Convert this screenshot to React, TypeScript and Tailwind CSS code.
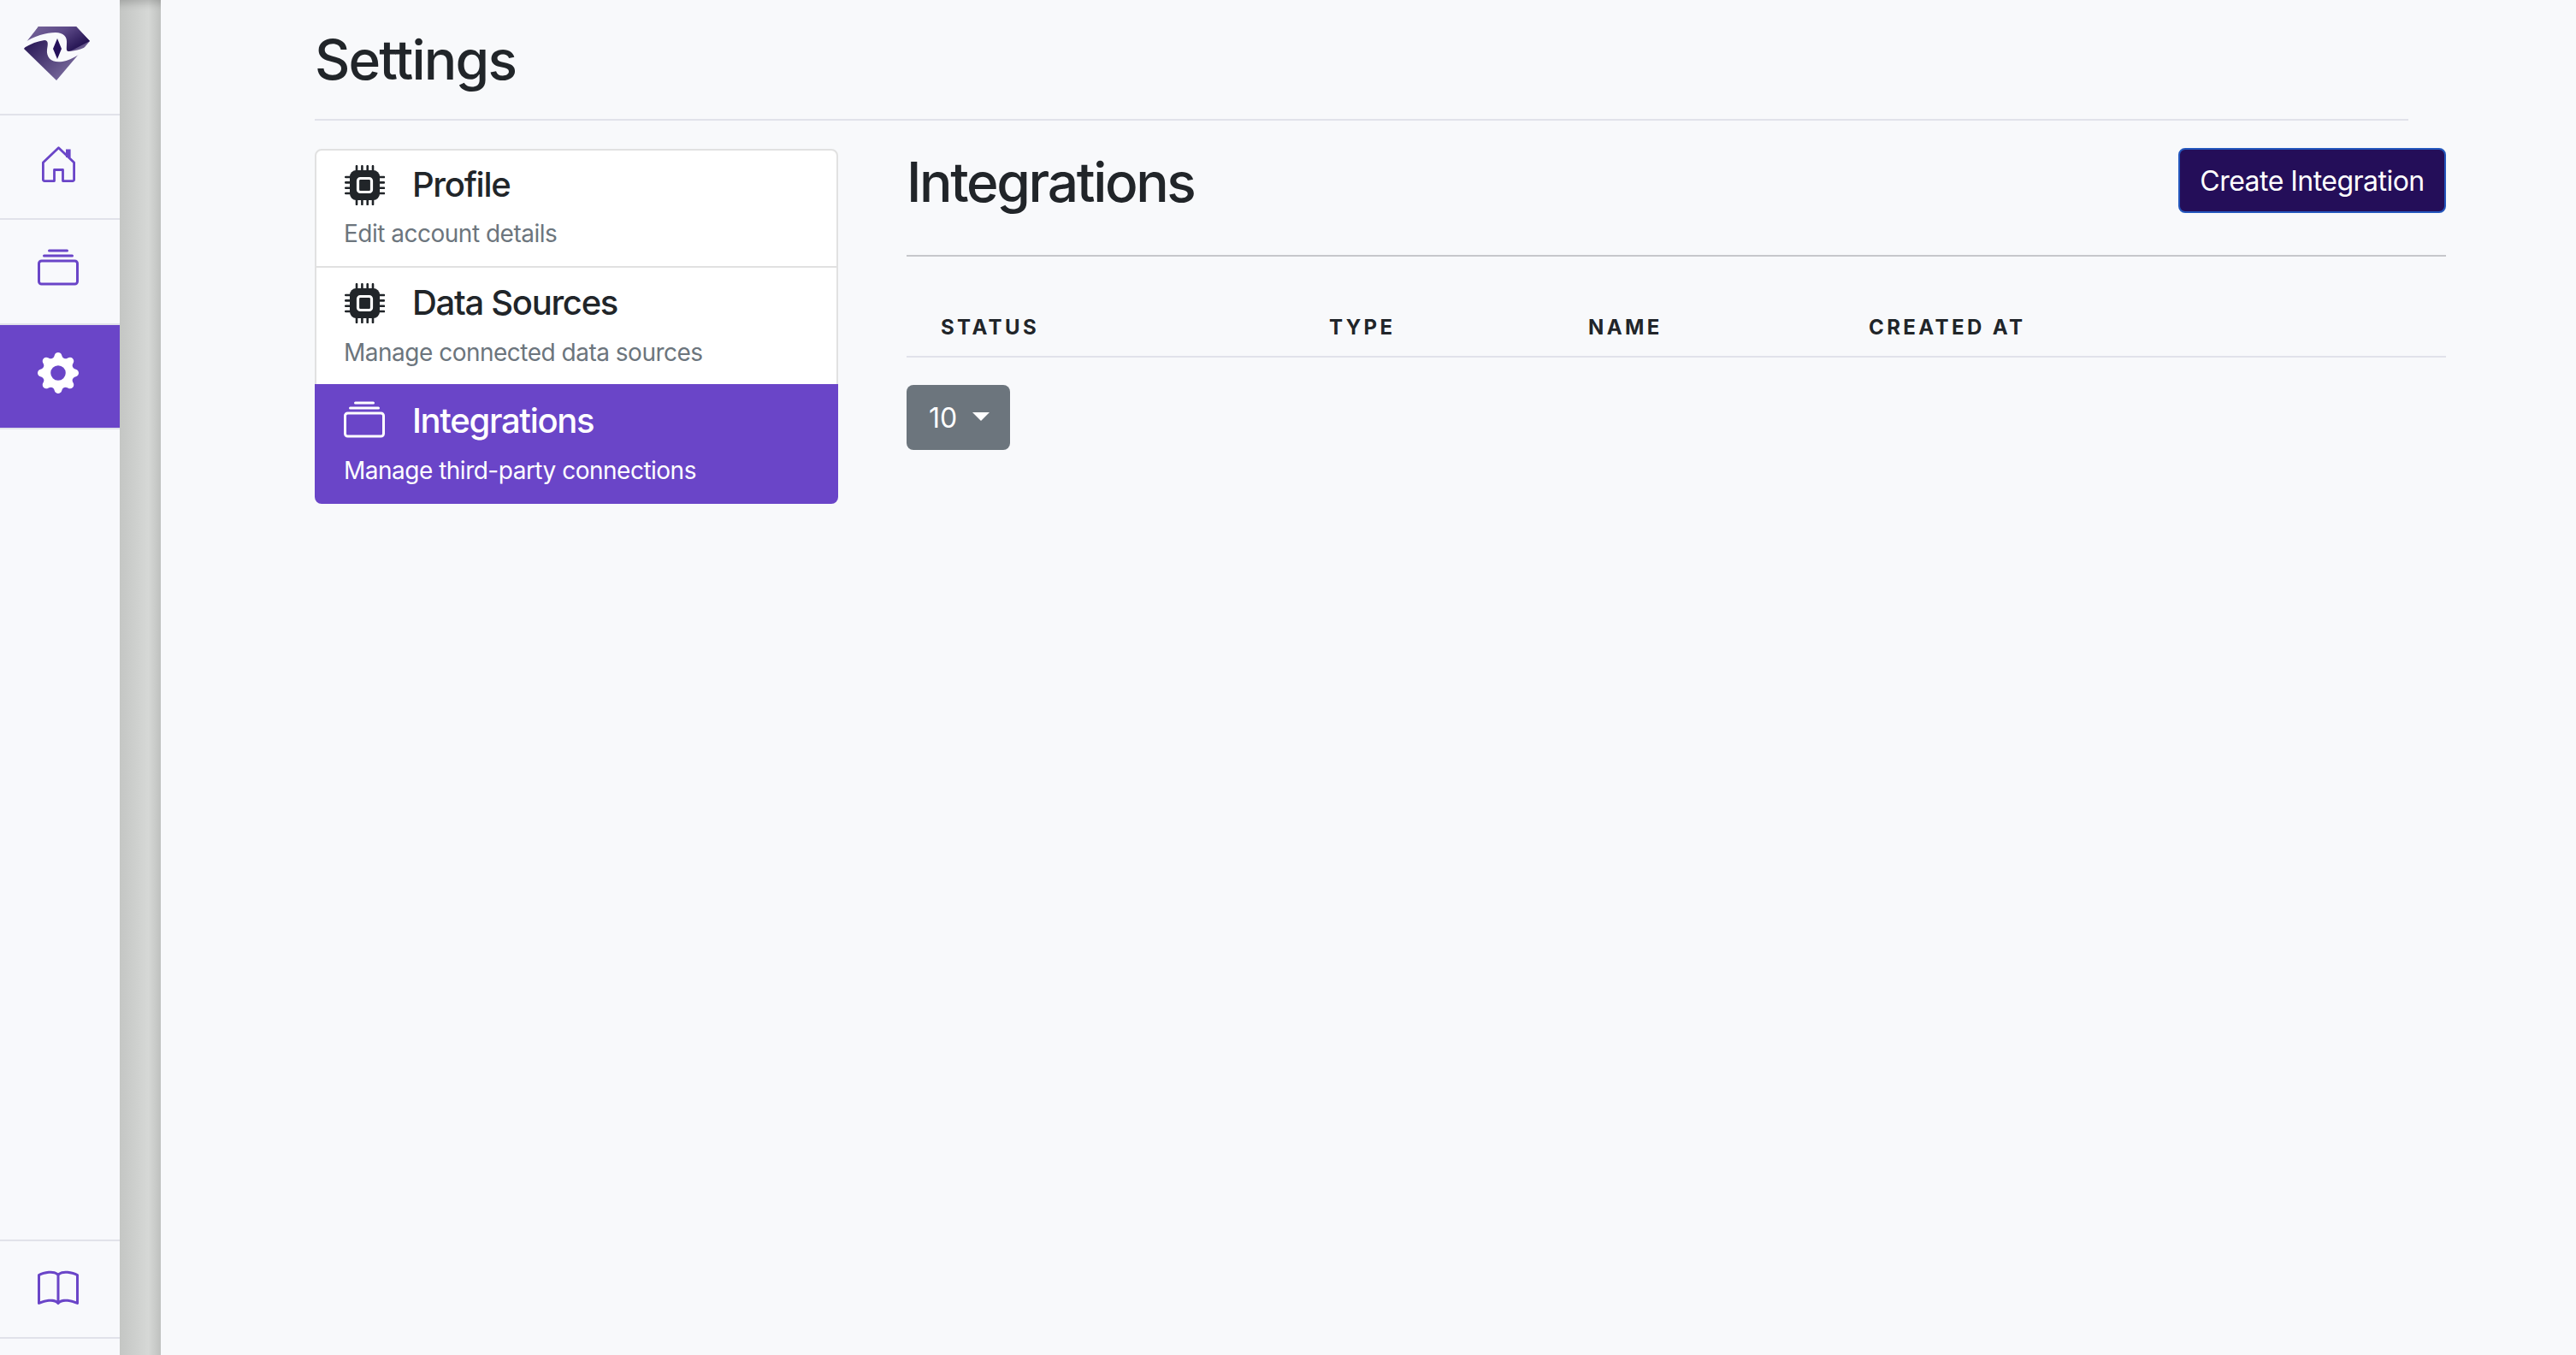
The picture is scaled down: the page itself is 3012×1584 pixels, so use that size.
import React from "react";
import { BsCollection, BsGearFill, BsBook } from "react-icons/bs";

function Logo() {
  return (
    <svg width="80" height="64" viewBox="0 0 80 64" className="block">
      <defs>
        <linearGradient id="a" x1="0" y1="0" x2="1" y2="0.6">
          <stop offset="0" stopColor="#7b6a9c" />
          <stop offset="0.5" stopColor="#5d4a88" />
          <stop offset="1" stopColor="#21104f" />
        </linearGradient>
        <linearGradient id="b" x1="0" y1="0" x2="1" y2="0.9">
          <stop offset="0.1" stopColor="#21104f" />
          <stop offset="0.8" stopColor="#76679a" />
        </linearGradient>
      </defs>
      <path d="M17 0H61L77 17L38 63L0 26Z" fill="url(#b)" />
      <path d="M17 0H61L77 17L52 30L32 12L2 19Z" fill="url(#a)" />
      <path
        d="M0 19C12 11 26 7 37 7C46 7 51 12 50 20C50 25 49 29 52 29C60 29 72 25 80 20C70 30 57 39 45 41C32 43 26 36 27 27C28 21 29 16 24 16C16 17 8 20 0 25Z"
        fill="#f8f9fc"
      />
      <path d="M39 14L44 26L39 38L34 26Z" fill="#24105a" />
    </svg>
  );
}

function HomeIcon() {
  return (
    <svg width="39" height="42" viewBox="0 0 39 42" fill="none" stroke="currentColor" strokeWidth="2.8" strokeLinejoin="round">
      <path d="M19.5 1.8L37.6 19V39A1.6 1.6 0 0 1 36 40.6H24.5V27.5H14.5V40.6H3A1.6 1.6 0 0 1 1.4 39V19Z" />
      <rect x="28" y="3.5" width="5.6" height="9.5" fill="currentColor" stroke="none" />
    </svg>
  );
}

function ChipIcon() {
  const pins = [14, 20.4, 26.7, 33];
  return (
    <svg width="47" height="47" viewBox="0 0 47 47" fill="none" className="block">
      {pins.map((p) => (
        <React.Fragment key={p}>
          <path d={`M${p} 1.2V46M1.2 ${p}H46`} stroke="currentColor" strokeWidth="2.6" strokeLinecap="round" />
        </React.Fragment>
      ))}
      <rect x="6" y="6" width="35" height="35" rx="7.5" fill="currentColor" />
      <rect x="15.5" y="15.5" width="16" height="16" rx="2.8" stroke="#ffffff" strokeWidth="3.2" />
    </svg>
  );
}

function NavCell({
  children,
  active,
  h,
}: {
  children: React.ReactNode;
  active?: boolean;
  h: string;
}) {
  return (
    <div
      className={`flex items-center justify-center border-b-2 border-[#e1e2ea] pr-[4px] ${h} ${
        active ? "bg-[#6a45c8] text-white" : "text-[#6a45c8]"
      }`}
    >
      {children}
    </div>
  );
}

function ListItem({
  icon,
  title,
  sub,
  active,
  className,
  gap,
}: {
  icon: React.ReactNode;
  title: string;
  sub: string;
  active?: boolean;
  className: string;
  gap: string;
}) {
  return (
    <div className={`${className} ${active ? "bg-[#6a45c8] text-white" : "bg-white text-[#212529]"}`}>
      <div className="flex h-[44px] items-center">
        <span className="flex w-[48px] justify-center">{icon}</span>
        <span className="ml-[32px] text-[40px] font-medium leading-[48px] tracking-[-1.3px]">{title}</span>
      </div>
      <div className={`${gap} text-[28px] leading-[42px] tracking-[-0.5px] ${active ? "text-white" : "text-[#6c757d]"}`}>{sub}</div>
    </div>
  );
}

export default function App() {
  return (
    <div className="flex h-[1584px] w-[3012px] overflow-hidden bg-[#f8f9fb] font-['Inter',sans-serif] text-[#212529]">
      <aside className="flex w-[140px] shrink-0 flex-col bg-[#f8f9fc]">
        <NavCell h="h-[135px]">
          <div className="-translate-y-[4px]">
            <Logo />
          </div>
        </NavCell>
        <NavCell h="h-[122px]">
          <div className="-translate-y-[3px]">
            <HomeIcon />
          </div>
        </NavCell>
        <NavCell h="h-[123px]">
          <BsCollection size={48} className="-translate-y-[4px]" />
        </NavCell>
        <NavCell active h="h-[122px]">
          <BsGearFill size={48} className="-translate-y-[4px]" />
        </NavCell>
        <div className="flex-1" />
        <div className="h-[2px] bg-[#e1e2ea]" />
        <div className="flex h-[112px] items-center justify-center pr-[4px] text-[#6a45c8]">
          <BsBook size={48} />
        </div>
        <div className="h-[2px] bg-[#e1e2ea]" />
        <div className="h-[19px]" />
      </aside>
      <div className="w-[48px] shrink-0 bg-gradient-to-r from-[#c4c6c4] via-[#d6d8d6] via-70% to-[#bfc1bf] shadow-[inset_0_14px_10px_-10px_rgba(0,0,0,0.18)]" />
      <main className="ml-[180px] flex w-[2492px] flex-col">
        <div className="mr-[44px] h-[141px] border-b-2 border-[#e1e2ea] pt-[28px]">
          <h1 className="text-[64px] font-medium leading-[84px] tracking-[-1.8px]">Settings</h1>
        </div>
        <div className="mt-[33px] flex items-start">
          <div className="w-[612px] shrink-0">
            <ListItem
              icon={<ChipIcon />}
              title="Profile"
              sub="Edit account details"
              gap="mt-[14px]"
              className="h-[139px] rounded-t-[8px] border-2 border-[#e1e1e1] px-[32px] pt-[18px]"
            />
            <ListItem
              icon={<ChipIcon />}
              title="Data Sources"
              sub="Manage connected data sources"
              gap="mt-[15px]"
              className="h-[136px] border-x-2 border-[#e1e1e1] px-[32px] pt-[19px]"
            />
            <ListItem
              active
              icon={<BsCollection size={48} />}
              title="Integrations"
              sub="Manage third-party connections"
              gap="mt-[15px]"
              className="h-[140px] rounded-b-[8px] px-[34px] pt-[21px]"
            />
          </div>
          <section className="ml-[80px] -mt-[1px] flex-1">
            <div className="flex h-[127px] items-start justify-between border-b-2 border-[#c6c7cb]">
              <h2 className="mt-[-2px] text-[64px] font-medium leading-[84px] tracking-[-2.35px]">Integrations</h2>
              <button className="h-[76px] w-[313px] rounded-[8px] border-2 border-[#2457bd] bg-[#240e59] pt-[2px] text-[32px] leading-none tracking-[-0.53px] text-white">
                Create Integration
              </button>
            </div>
            <div className="flex h-[118px] items-end border-b-2 border-[#e1e2ea] pb-[18px] text-[24px] font-bold uppercase leading-[30px] tracking-[3.4px]">
              <span className="ml-[40px] w-[454px]">Status</span>
              <span className="w-[303px]">Type</span>
              <span className="w-[328px]">Name</span>
              <span>Created at</span>
            </div>
            <button className="mt-[32px] flex h-[76px] w-[121px] items-center rounded-[8px] bg-[#6c757d] pl-[26px] pt-[2px] text-[32px] leading-none text-white">
              10
              <span className="ml-[18px] -mt-[4px] h-0 w-0 border-x-[10px] border-t-[10px] border-x-transparent border-t-white" />
            </button>
          </section>
        </div>
      </main>
    </div>
  );
}
